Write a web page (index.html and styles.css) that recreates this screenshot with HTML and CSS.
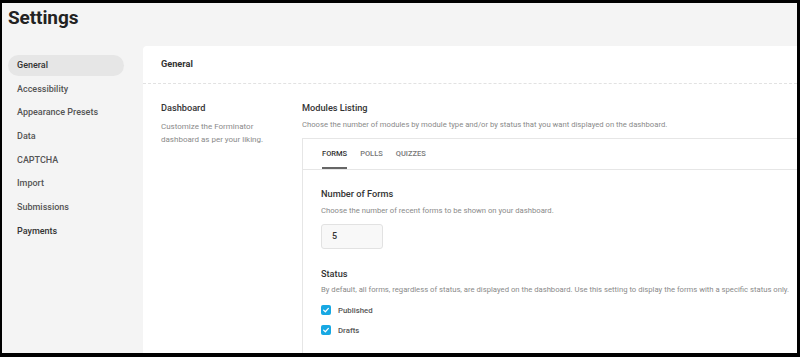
FILE: index.html
```html
<!DOCTYPE html>
<html>
<head>
<meta charset="utf-8">
<link rel="stylesheet" href="styles.css">
</head>
<body>
<div class="page">
  <h1 class="title">Settings</h1>
  <div class="layout">
    <nav class="sidebar">
      <div class="nav-item active">General</div>
      <div class="nav-item">Accessibility</div>
      <div class="nav-item">Appearance Presets</div>
      <div class="nav-item">Data</div>
      <div class="nav-item">CAPTCHA</div>
      <div class="nav-item">Import</div>
      <div class="nav-item">Submissions</div>
      <div class="nav-item strong">Payments</div>
    </nav>
    <main class="card">
      <div class="card-header">General</div>
      <div class="card-body">
        <div class="col-label">
          <div class="label-title">Dashboard</div>
          <div class="label-desc">Customize the Forminator dashboard as per your liking.</div>
        </div>
        <div class="col-field">
          <div class="field-title">Modules Listing</div>
          <div class="field-desc">Choose the number of modules by module type and/or by status that you want displayed on the dashboard.</div>
          <div class="tabs-box">
            <div class="tabs">
              <div class="tab active">FORMS</div>
              <div class="tab">POLLS</div>
              <div class="tab">QUIZZES</div>
            </div>
            <div class="tab-content">
              <div class="field-title">Number of Forms</div>
              <div class="field-desc">Choose the number of recent forms to be shown on your dashboard.</div>
              <div class="input">5</div>
              <div class="field-title status">Status</div>
              <div class="field-desc tight">By default, all forms, regardless of status, are displayed on the dashboard. Use this setting to display the forms with a specific status only.</div>
              <label class="check first"><span class="box"><svg viewBox="0 0 10 10" width="8" height="8"><path d="M2 5.2 L4.2 7.2 L8 3" fill="none" stroke="#fff" stroke-width="1.5" stroke-linecap="round" stroke-linejoin="round"/></svg></span>Published</label>
              <label class="check"><span class="box"><svg viewBox="0 0 10 10" width="8" height="8"><path d="M2 5.2 L4.2 7.2 L8 3" fill="none" stroke="#fff" stroke-width="1.5" stroke-linecap="round" stroke-linejoin="round"/></svg></span>Drafts</label>
            </div>
          </div>
        </div>
      </div>
    </main>
  </div>
</div>
</body>
</html>
```
FILE: styles.css
```css
html, body {
  margin: 0;
  padding: 0;
  height: 100%;
}
body {
  background: #000;
  padding: 3px 3px 4px 2px;
  box-sizing: border-box;
  font-family: Roboto, "Liberation Sans", sans-serif;
  overflow: hidden;
}
.page {
  background: #f4f4f4;
  height: 100%;
  display: flex;
  flex-direction: column;
  overflow: hidden;
}
.title {
  margin: 0;
  padding: 2px 0 0 6px;
  height: 43px;
  box-sizing: border-box;
  font-size: 19px;
  font-weight: 700;
  color: #222;
  line-height: 26px;
  letter-spacing: -0.1px;
}
.layout {
  flex: 1;
  display: flex;
  min-height: 0;
}
.sidebar {
  width: 141px;
  flex: none;
  padding-top: 9px;
  display: flex;
  flex-direction: column;
  gap: 2.7px;
}
.nav-item {
  margin-left: 6px;
  width: 116px;
  height: 21px;
  box-sizing: border-box;
  padding-left: 9px;
  line-height: 21px;
  font-size: 9px;
  font-weight: 500;
  color: #555;
  border-radius: 11px;
}
.nav-item.active {
  background: #e6e6e6;
  color: #333;
}
.nav-item.strong {
  color: #333;
}
.card {
  flex: 1;
  background: #fff;
  border-radius: 4px 0 0 0;
  overflow: hidden;
  min-width: 0;
}
.card-header {
  height: 38px;
  box-sizing: border-box;
  padding-left: 18px;
  line-height: 36px;
  font-size: 9.2px;
  font-weight: 700;
  color: #333;
  border-bottom: 1px dashed #e2e2e2;
}
.card-body {
  display: flex;
  padding: 17px 0 0 18px;
}
.col-label {
  width: 141px;
  flex: none;
}
.label-title, .field-title {
  font-size: 9.2px;
  font-weight: 500;
  color: #333;
  line-height: 14px;
}
.label-desc {
  margin-top: 4.5px;
  font-size: 8px;
  color: #8a8a8a;
  line-height: 13px;
  width: 118px;
}
.col-field {
  flex: 1;
  min-width: 0;
}
.field-desc {
  margin-top: 4px;
  font-size: 7.7px;
  color: #8a8a8a;
  line-height: 12px;
  white-space: nowrap;
}
.field-desc.tight {
  margin-top: 3px;
}
.tabs-box {
  margin-top: 7px;
  border: 1px solid #e6e6e6;
  border-right: none;
  width: calc(100% + 20px);
}
.tabs {
  display: flex;
  gap: 13px;
  padding-left: 19px;
  height: 30px;
  border-bottom: 1px solid #e6e6e6;
}
.tab {
  font-size: 7.5px;
  font-weight: 500;
  color: #777;
  line-height: 30px;
  height: 30px;
  box-sizing: border-box;
}
.tab.active {
  color: #333;
  border-bottom: 2px solid #666;
}
.tab-content {
  padding: 17px 0 40px 18px;
}
.input {
  margin-top: 7px;
  width: 62px;
  height: 25px;
  box-sizing: border-box;
  border: 1px solid #e2e2e2;
  border-radius: 3px;
  background: #f8f8f8;
  font-size: 9px;
  font-weight: 500;
  color: #333;
  line-height: 23px;
  padding-left: 10px;
}
.status {
  margin-top: 18px;
}
.check {
  display: flex;
  align-items: center;
  gap: 7px;
  margin-top: 6px;
  height: 14px;
  font-size: 7.8px;
  font-weight: 500;
  color: #555;
}
.check.first {
  margin-top: 7px;
}
.box {
  width: 10px;
  height: 10px;
  border-radius: 2px;
  background: #17a8e3;
  display: flex;
  align-items: center;
  justify-content: center;
}
```
